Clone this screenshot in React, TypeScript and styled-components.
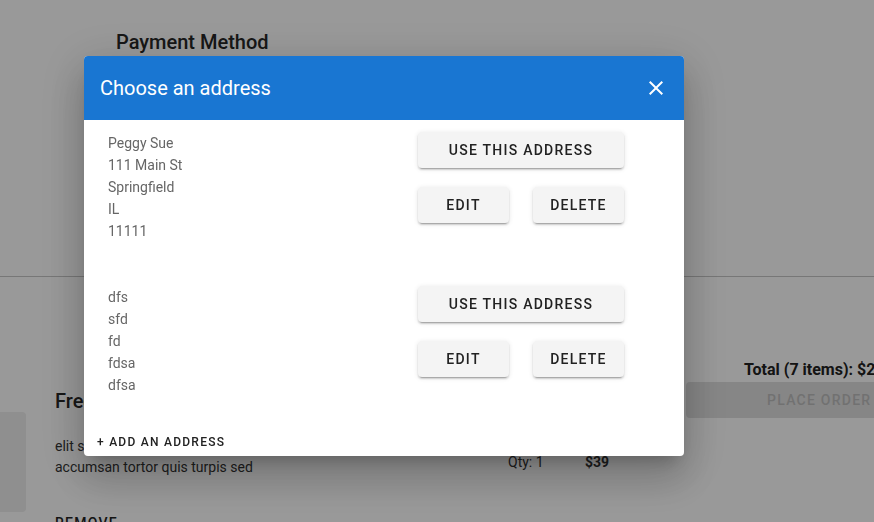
import React from "react";
import styled, { createGlobalStyle } from "styled-components";

const GlobalStyle = createGlobalStyle`
  html, body {
    margin: 0;
    padding: 0;
    overflow: hidden;
    background: #ffffff;
    font-family: Roboto, "Liberation Sans", Arial, sans-serif;
  }
  * { box-sizing: border-box; }
`;

const Page = styled.div`
  width: 874px;
  height: 522px;
  overflow: hidden;
  position: relative;
  color: #212121;
`;

const TopSection = styled.section`
  height: 277px;
  padding: 30px 0 0 116px;
  border-bottom: 1px solid #c6c6c6;
`;

const SectionTitle = styled.h2`
  margin: 0;
  font-size: 20px;
  line-height: 24px;
  font-weight: 500;
  color: #262626;
`;

const BottomSection = styled.section`
  display: grid;
  grid-template-columns: 686px 260px;
`;

const CartColumn = styled.div`
  padding-top: 112px;
`;

const ItemTitle = styled.h3`
  margin: 0 0 0 55px;
  font-size: 20px;
  line-height: 24px;
  font-weight: 500;
  color: #262626;
`;

const ItemRow = styled.div`
  display: grid;
  grid-template-columns: 26px 1fr;
  column-gap: 29px;
  margin-top: -1px;
`;

const ItemImage = styled.div`
  height: 100px;
  background: #eeeeee;
  border-radius: 0 4px 4px 0;
`;

const ItemInfo = styled.div`
  padding-top: 24px;
`;

const ItemLine = styled.div`
  display: grid;
  grid-template-columns: 453px 77px auto;
  align-items: start;
`;

const Description = styled.p`
  margin: 0;
  font-size: 14px;
  line-height: 21px;
  color: #333;
  white-space: nowrap;
`;

const Line = styled.span`
  display: block;
`;

const Meta = styled.span<{ $bold?: boolean }>`
  padding-top: 16px;
  font-size: 14px;
  line-height: 21px;
  font-weight: ${(p) => (p.$bold ? 700 : 400)};
  color: #333;
`;

const RemoveLink = styled.div`
  margin-top: 37px;
  font-size: 14px;
  line-height: 16px;
  font-weight: 500;
  letter-spacing: 1.25px;
  color: #222;
`;

const SummaryColumn = styled.div`
  padding-top: 83px;
`;

const TotalText = styled.div`
  margin-left: 58px;
  font-size: 16px;
  line-height: 19px;
  font-weight: 700;
  color: #222;
  white-space: nowrap;
`;

const PlaceOrder = styled.button`
  margin-top: 3px;
  width: 100%;
  height: 36px;
  border: none;
  border-radius: 4px;
  background: #e0e0e0;
  color: #bdbdbd;
  font-family: inherit;
  font-size: 14px;
  font-weight: 500;
  letter-spacing: 1.25px;
  text-align: left;
  padding-left: 81px;
`;

const Backdrop = styled.div`
  position: fixed;
  inset: 0;
  background: rgba(0, 0, 0, 0.4);
`;

const Dialog = styled.div`
  position: fixed;
  left: 84px;
  top: 56px;
  width: 600px;
  height: 400px;
  display: flex;
  flex-direction: column;
  background: #ffffff;
  border-radius: 4px;
  box-shadow: 0px 11px 15px -7px rgba(0, 0, 0, 0.2),
    0px 24px 38px 3px rgba(0, 0, 0, 0.14), 0px 9px 46px 8px rgba(0, 0, 0, 0.12);
`;

const DialogHeader = styled.header`
  height: 64px;
  flex: none;
  display: flex;
  align-items: center;
  justify-content: space-between;
  padding: 0 16px;
  background: #1976d2;
  border-radius: 4px 4px 0 0;
`;

const DialogTitle = styled.h1`
  margin: 0;
  font-size: 20px;
  line-height: 24px;
  font-weight: 400;
  color: #ffffff;
`;

const CloseButton = styled.button`
  width: 24px;
  height: 24px;
  padding: 0;
  border: none;
  background: transparent;
  display: flex;
  align-items: center;
  justify-content: center;
  color: #ffffff;
`;

const DialogBody = styled.div`
  flex: 1;
  display: flex;
  flex-direction: column;
  padding: 12px 60px 0 24px;
`;

const AddressList = styled.div`
  flex: 1;
  display: flex;
  flex-direction: column;
  gap: 44px;
`;

const AddressRow = styled.div`
  display: flex;
`;

const AddressText = styled.div`
  flex: 1;
  font-size: 14px;
  line-height: 22px;
  color: #666666;
`;

const Actions = styled.div`
  width: 206px;
  display: grid;
  grid-template-columns: 1fr 1fr;
  column-gap: 24px;
  row-gap: 19px;
  align-content: start;
`;

const ActionButton = styled.button<{ $wide?: boolean }>`
  grid-column: ${(p) => (p.$wide ? "1 / span 2" : "auto")};
  height: 36px;
  border: none;
  border-radius: 4px;
  background: #f4f4f4;
  color: #222222;
  font-family: inherit;
  font-size: 14px;
  font-weight: 500;
  letter-spacing: 1.25px;
  text-transform: uppercase;
  padding: 0;
  box-shadow: 0px 3px 1px -2px rgba(0, 0, 0, 0.2),
    0px 2px 2px 0px rgba(0, 0, 0, 0.14), 0px 1px 5px 0px rgba(0, 0, 0, 0.12);
`;

const AddAddress = styled.button`
  align-self: flex-start;
  height: 30px;
  margin-left: -11px;
  padding: 2px 0 0 0;
  border: none;
  background: transparent;
  color: #222222;
  font-family: inherit;
  font-size: 12px;
  font-weight: 500;
  letter-spacing: 1.25px;
`;

const CloseIcon = () => (
  <svg width="24" height="24" viewBox="0 0 24 24" fill="currentColor">
    <path d="M19 6.41 17.59 5 12 10.59 6.41 5 5 6.41 10.59 12 5 17.59 6.41 19 12 13.41 17.59 19 19 17.59 13.41 12z" />
  </svg>
);

const addresses = [
  ["Peggy Sue", "111 Main St", "Springfield", "IL", "11111"],
  ["dfs", "sfd", "fd", "fdsa", "dfsa"],
];

export default function App() {
  return (
    <>
      <GlobalStyle />
      <Page>
        <TopSection>
          <SectionTitle>Payment Method</SectionTitle>
        </TopSection>
        <BottomSection>
          <CartColumn>
            <ItemTitle>Frequently Bought</ItemTitle>
            <ItemRow>
              <ItemImage />
              <ItemInfo>
                <ItemLine>
                  <Description>
                    <Line>elit sed do eiusmod tempor incididunt ut labore</Line>
                    <Line>accumsan tortor quis turpis sed</Line>
                  </Description>
                  <Meta>Qty: 1</Meta>
                  <Meta $bold>$39</Meta>
                </ItemLine>
                <RemoveLink>REMOVE</RemoveLink>
              </ItemInfo>
            </ItemRow>
          </CartColumn>
          <SummaryColumn>
            <TotalText>Total (7 items): $275.00</TotalText>
            <PlaceOrder disabled>PLACE ORDER</PlaceOrder>
          </SummaryColumn>
        </BottomSection>
        <Backdrop />
        <Dialog>
          <DialogHeader>
            <DialogTitle>Choose an address</DialogTitle>
            <CloseButton aria-label="close">
              <CloseIcon />
            </CloseButton>
          </DialogHeader>
          <DialogBody>
            <AddressList>
              {addresses.map((lines, i) => (
                <AddressRow key={i}>
                  <AddressText>
                    {lines.map((l, j) => (
                      <Line key={j}>{l}</Line>
                    ))}
                  </AddressText>
                  <Actions>
                    <ActionButton $wide>Use this address</ActionButton>
                    <ActionButton>Edit</ActionButton>
                    <ActionButton>Delete</ActionButton>
                  </Actions>
                </AddressRow>
              ))}
            </AddressList>
            <AddAddress>+ ADD AN ADDRESS</AddAddress>
          </DialogBody>
        </Dialog>
      </Page>
    </>
  );
}
